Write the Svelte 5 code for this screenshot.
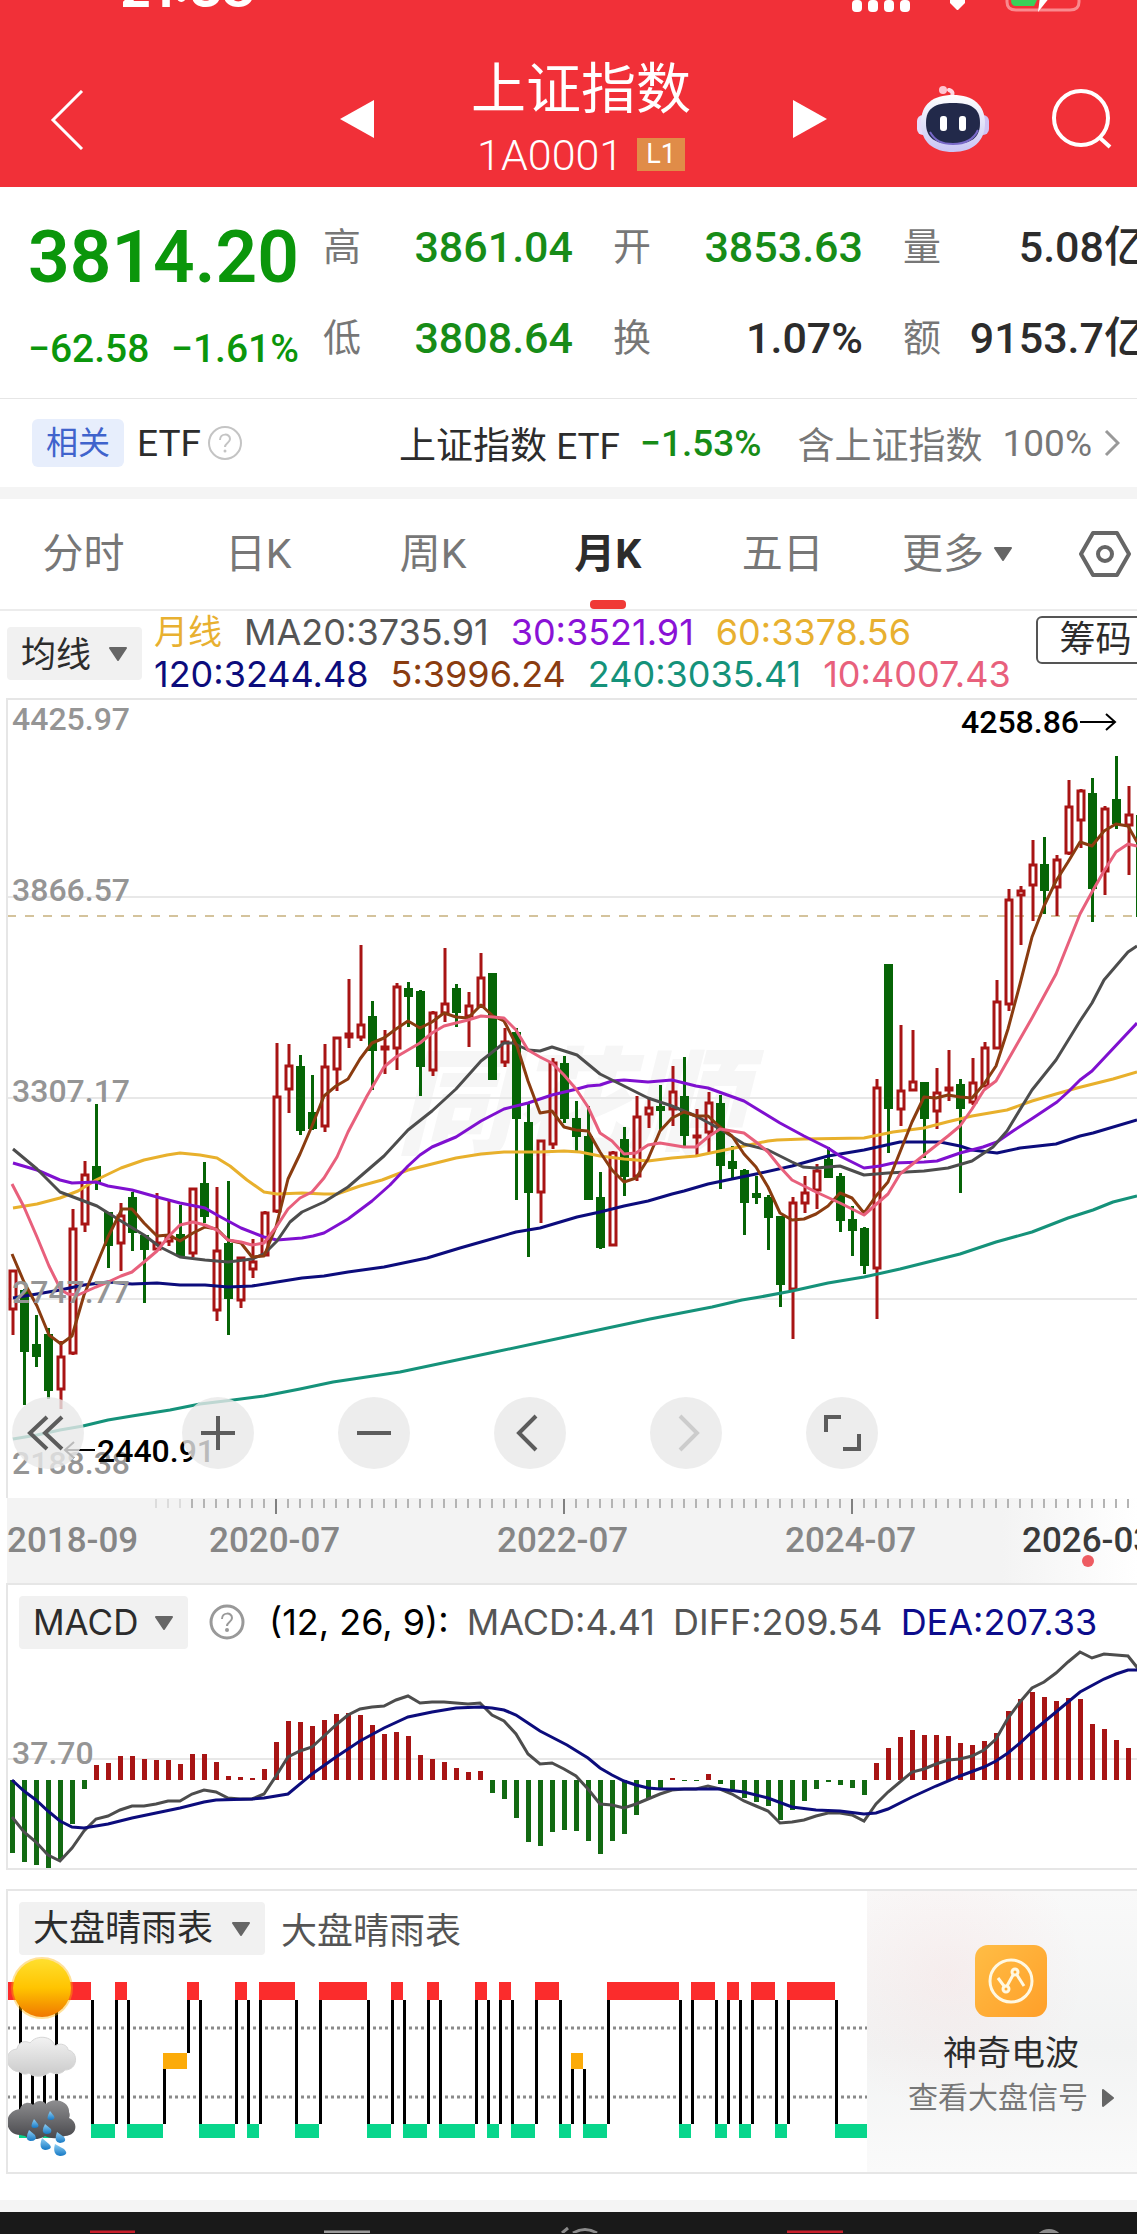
<script lang="ts">
	type Candle = [up: number, high: number, top: number, bottom: number, low: number];

	// one entry per month, oldest first
	const candles: Candle[] = [
		[1, 1271, 1271, 1311, 1336], [0, 1290, 1291, 1353, 1406], [0, 1316, 1345, 1358, 1368],
		[0, 1329, 1335, 1392, 1400], [1, 1342, 1357, 1391, 1410], [1, 1210, 1229, 1355, 1356],
		[1, 1162, 1175, 1226, 1233], [0, 1105, 1167, 1183, 1191], [0, 1213, 1213, 1247, 1269],
		[1, 1204, 1216, 1245, 1272], [0, 1193, 1198, 1234, 1252], [0, 1236, 1236, 1251, 1304],
		[1, 1194, 1243, 1251, 1251], [1, 1200, 1237, 1243, 1247], [0, 1206, 1235, 1257, 1258],
		[1, 1189, 1189, 1255, 1258], [0, 1163, 1184, 1218, 1224], [1, 1188, 1251, 1312, 1322],
		[0, 1182, 1244, 1300, 1336], [1, 1258, 1258, 1302, 1309], [1, 1240, 1262, 1271, 1279],
		[1, 1212, 1213, 1257, 1257], [1, 1044, 1097, 1213, 1214], [1, 1045, 1066, 1091, 1114],
		[0, 1056, 1067, 1132, 1136], [0, 1076, 1113, 1130, 1131], [1, 1045, 1067, 1128, 1133],
		[1, 1038, 1038, 1071, 1092], [1, 980, 1034, 1039, 1049], [1, 946, 1025, 1039, 1042],
		[0, 1002, 1017, 1052, 1091], [1, 1031, 1047, 1051, 1075], [1, 984, 987, 1050, 1071],
		[0, 983, 989, 998, 1028], [0, 991, 992, 1068, 1097], [1, 1012, 1013, 1072, 1077],
		[1, 949, 1004, 1015, 1023], [0, 985, 989, 1014, 1028], [1, 993, 1006, 1018, 1048],
		[1, 954, 978, 1008, 1009], [0, 974, 974, 1081, 1081], [1, 1029, 1042, 1064, 1068],
		[0, 1029, 1033, 1120, 1201], [0, 1105, 1123, 1194, 1258], [1, 1141, 1141, 1194, 1224],
		[1, 1059, 1063, 1146, 1150], [0, 1057, 1064, 1120, 1124], [0, 1102, 1119, 1138, 1152],
		[0, 1107, 1137, 1201, 1201], [0, 1173, 1198, 1249, 1250], [1, 1152, 1153, 1247, 1247],
		[0, 1128, 1140, 1178, 1197], [1, 1097, 1117, 1178, 1182], [1, 1098, 1108, 1116, 1129],
		[0, 1086, 1107, 1112, 1131], [1, 1067, 1092, 1111, 1127], [0, 1058, 1097, 1137, 1148],
		[1, 1110, 1136, 1139, 1156], [1, 1093, 1103, 1134, 1153], [0, 1096, 1104, 1167, 1190],
		[0, 1147, 1162, 1170, 1179], [0, 1170, 1171, 1204, 1236], [0, 1177, 1194, 1199, 1205],
		[0, 1196, 1198, 1219, 1251], [0, 1217, 1217, 1286, 1308], [1, 1198, 1203, 1291, 1340],
		[1, 1177, 1193, 1205, 1214], [1, 1165, 1171, 1192, 1210], [0, 1148, 1160, 1179, 1179],
		[0, 1174, 1177, 1222, 1233], [0, 1207, 1220, 1232, 1257], [0, 1228, 1229, 1267, 1275],
		[1, 1080, 1088, 1270, 1320], [0, 965, 965, 1110, 1154], [1, 1026, 1091, 1111, 1127],
		[1, 1031, 1082, 1092, 1092], [0, 1083, 1083, 1120, 1159], [1, 1069, 1093, 1113, 1130],
		[1, 1051, 1088, 1092, 1102], [0, 1080, 1085, 1110, 1194], [1, 1059, 1083, 1104, 1106],
		[1, 1043, 1048, 1088, 1088], [1, 981, 1002, 1050, 1050], [1, 890, 900, 1006, 1012],
		[1, 887, 891, 897, 946], [1, 841, 865, 887, 922], [0, 838, 865, 892, 915],
		[1, 856, 860, 889, 917], [1, 781, 807, 855, 856], [1, 790, 791, 822, 849],
		[0, 779, 794, 890, 923], [1, 807, 809, 873, 896], [0, 757, 800, 825, 830],
		[1, 787, 815, 827, 876], [0, 816, 816, 918, 918]
	];

	const averages = [
		{
			color: '#15927a',
			points:
				'13,1440 37,1436 60,1431 83,1427 108,1421 132,1417 170,1411 200,1405 233,1401 264,1397 300,1390 333,1383 400,1373 490,1354 570,1337 650,1320 712,1308 742,1301 760,1298 792,1292 828,1284 864,1278 900,1270 936,1261 960,1255 996,1243 1032,1233 1068,1219 1093,1211 1113,1203 1137,1197'
		},
		{
			color: '#0c0c7c',
			points:
				'13,1299 37,1295 60,1291 84,1286 108,1283 132,1285 157,1284 180,1286 205,1286 228,1288 252,1287 277,1283 302,1279 324,1277 348,1273 384,1268 427,1259 460,1249 481,1243 516,1233 540,1229 577,1218 600,1213 624,1207 648,1202 672,1195 684,1192 708,1185 732,1180 756,1175 792,1167 828,1157 864,1151 900,1143 940,1143 960,1147 972,1151 997,1154 1020,1149 1056,1145 1080,1137 1093,1134 1137,1121'
		},
		{
			color: '#e8b02c',
			points:
				'13,1209 37,1205 60,1199 78,1192 96,1181 121,1169 144,1161 167,1156 180,1154 200,1156 217,1159 230,1167 247,1181 264,1193 277,1195 302,1194 324,1195 337,1195 360,1187 382,1181 408,1171 432,1165 456,1159 481,1155 504,1153 540,1153 564,1152 580,1153 600,1157 624,1160 648,1162 672,1159 696,1157 720,1152 744,1147 768,1142 777,1141 804,1140 864,1139 893,1133 924,1129 947,1123 972,1117 1007,1111 1032,1102 1056,1095 1077,1089 1113,1080 1137,1073'
		},
		{
			color: '#7f10d0',
			points:
				'13,1164 37,1171 60,1181 72,1184 96,1183 108,1187 132,1191 157,1198 180,1204 205,1209 217,1216 241,1229 264,1238 277,1241 302,1239 313,1237 324,1234 348,1220 372,1202 390,1186 408,1167 420,1156 432,1148 456,1138 481,1122 504,1110 528,1104 552,1096 577,1090 588,1087 600,1086 612,1082 624,1081 648,1083 672,1081 696,1087 708,1089 744,1102 780,1124 804,1137 828,1149 840,1157 864,1169 880,1167 893,1164 924,1163 937,1162 960,1154 983,1148 997,1143 1013,1132 1033,1119 1057,1103 1068,1093 1080,1081 1092,1072 1137,1024'
		},
		{
			color: '#4d4d4d',
			points:
				'13,1150 37,1170 60,1193 97,1207 121,1222 144,1236 160,1248 180,1258 205,1261 228,1263 252,1260 264,1255 277,1242 290,1223 302,1213 324,1203 348,1188 384,1157 408,1131 432,1112 456,1090 481,1062 504,1044 513,1044 528,1051 540,1052 552,1048 577,1056 600,1075 624,1087 648,1099 672,1107 696,1117 720,1130 744,1145 768,1151 792,1163 803,1168 816,1169 840,1167 864,1176 888,1174 924,1172 948,1169 972,1162 993,1148 1007,1132 1032,1091 1056,1061 1080,1022 1092,1004 1104,981 1128,953 1137,947'
		},
		{
			color: '#8a3c10',
			points:
				'12,1255 24,1283 37,1307 49,1336 61,1345 72,1337 84,1296 96,1267 108,1238 117,1220 122,1210 132,1210 144,1224 157,1237 169,1236 180,1242 193,1234 205,1228 217,1230 228,1241 241,1244 252,1258 264,1257 276,1228 288,1180 300,1155 312,1127 324,1097 336,1087 348,1080 360,1060 372,1044 384,1039 396,1030 408,1022 420,1029 432,1023 444,1014 456,1018 468,1019 481,1006 493,1017 504,1022 517,1047 528,1082 540,1114 552,1112 564,1128 576,1131 588,1132 600,1153 612,1171 624,1183 636,1179 648,1160 660,1132 672,1119 684,1113 696,1117 708,1117 720,1128 732,1137 744,1155 756,1168 768,1188 780,1214 792,1221 804,1220 816,1215 828,1207 840,1194 852,1199 864,1214 876,1197 888,1183 900,1153 912,1123 924,1098 936,1099 948,1096 960,1098 972,1099 984,1085 996,1067 1008,1030 1020,985 1032,938 1044,907 1056,882 1068,863 1080,843 1092,847 1104,832 1116,825 1128,827 1137,843'
		},
		{
			color: '#e8607c',
			points:
				'12,1185 24,1208 37,1238 49,1267 61,1291 68,1295 78,1296 96,1288 108,1283 121,1277 132,1273 144,1263 157,1252 169,1237 180,1226 193,1223 205,1226 217,1231 228,1241 241,1243 252,1246 264,1244 277,1227 288,1210 300,1199 312,1193 324,1179 337,1158 348,1133 367,1097 384,1068 396,1058 420,1044 432,1034 444,1027 468,1021 481,1017 504,1019 516,1031 528,1051 540,1058 552,1064 564,1076 576,1090 588,1108 600,1134 612,1142 624,1155 636,1154 648,1146 660,1144 672,1146 684,1148 696,1148 708,1138 720,1130 744,1134 756,1143 768,1153 780,1168 792,1181 816,1193 840,1204 864,1216 888,1195 900,1175 924,1156 948,1137 960,1127 972,1110 984,1091 996,1082 1020,1040 1032,1019 1056,975 1080,915 1092,893 1104,872 1116,853 1128,845 1137,847'
		}
	];

	const zero = 1781;
	const histogram = [
		1854, 1863, 1866, 1869, 1860, 1825, 1790, 1766, 1764, 1757, 1757, 1760, 1761, 1761, 1765, 1755,
		1755, 1763, 1777, 1778, 1779, 1770, 1743, 1722, 1723, 1727, 1721, 1715, 1714, 1716, 1726, 1735,
		1733, 1737, 1756, 1760, 1763, 1769, 1773, 1772, 1794, 1800, 1819, 1843, 1847, 1833, 1831, 1832,
		1842, 1855, 1842, 1835, 1816, 1800, 1789, 1779, 1782, 1782, 1775, 1785, 1791, 1799, 1803, 1807,
		1821, 1811, 1802, 1790, 1783, 1786, 1789, 1796, 1764, 1749, 1738, 1731, 1736, 1736, 1737, 1744,
		1746, 1742, 1734, 1712, 1700, 1693, 1698, 1702, 1699, 1700, 1725, 1730, 1741, 1749
	];
	const diff = [
		1818, 1833, 1843, 1856, 1862, 1849, 1832, 1820, 1817, 1811, 1807, 1807, 1805, 1802, 1802, 1795,
		1791, 1793, 1799, 1800, 1800, 1795, 1777, 1758, 1752, 1748, 1737, 1726, 1716, 1710, 1708, 1707,
		1701, 1697, 1704, 1703, 1703, 1704, 1705, 1704, 1716, 1722, 1735, 1755, 1765, 1764, 1770, 1777,
		1790, 1805, 1806, 1809, 1805, 1800, 1795, 1791, 1790, 1790, 1787, 1790, 1795, 1802, 1807, 1812,
		1824, 1823, 1821, 1817, 1814, 1814, 1816, 1822, 1805, 1793, 1783, 1773, 1770, 1765, 1761, 1760,
		1757, 1751, 1740, 1719, 1703, 1689, 1683, 1674, 1663, 1653, 1659, 1655, 1656, 1657, 1672
	];
	const dea =
		'12,1781 24,1792 36,1801 48,1812 60,1822 72,1828 84,1829 96,1827 108,1825 132,1819 156,1814 180,1809 204,1803 216,1801 252,1800 264,1799 288,1795 312,1775 336,1758 360,1742 384,1729 408,1718 432,1713 456,1709 480,1708 492,1709 504,1711 516,1716 528,1724 540,1732 567,1746 588,1759 600,1769 612,1776 624,1782 636,1786 648,1789 660,1790 720,1790 744,1793 768,1799 792,1808 816,1811 840,1812 864,1815 876,1814 888,1810 912,1798 936,1787 960,1777 984,1768 996,1762 1008,1754 1020,1744 1032,1733 1056,1713 1080,1693 1104,1680 1116,1675 1128,1671 1140,1671';

	const xAt = (i: number) => 12 + i * 12;
	const diffPoints = diff.map((y, i) => `${xAt(i)},${y}`).join(' ');

	// runs of sunny (R), cloudy (Y) and rainy (G) months
	const weather =
		'R1 G1 Y1 G1 R3 G2 R1 G3 Y2 R1 G3 R1 G1 R3 G2 R4 G2 R1 G2 R1 G3 R1 G1 R1 G2 R2 G1 Y1 G2 R6 G1 R2 G1 R1 G1 R2 G1 R4 G7';
	const bands = {
		R: { top: 1983, bottom: 2001, color: '#fb2c2c' },
		Y: { top: 2054, bottom: 2070, color: '#fcab09' },
		G: { top: 2125, bottom: 2139, color: '#08d68c' }
	};

	let edge = 7;
	const runs = weather.split(' ').map((run) => {
		const band = bands[run[0] as keyof typeof bands];
		const x = edge;
		const width = Number(run.slice(1)) * 12;
		edge += width;
		return { ...band, x, width };
	});

	const axisTicks = Array.from({ length: 83 }, (_, i) => 156 + i * 12);
	const axisYears = [
		{ x: 209, text: '2020-07' },
		{ x: 497, text: '2022-07' },
		{ x: 785, text: '2024-07' }
	];

	const tabs = ['分时', '日K', '周K', '月K', '五日'];
	let active = $state('月K');
</script>

{#snippet caret()}
	<svg class="caret" viewBox="0 0 20 14" aria-hidden="true">
		<path d="M2 1h16L10 13z" fill="#666" stroke="#666" stroke-width="2" stroke-linejoin="round" />
	</svg>
{/snippet}

<main class="page">
	<header class="top">
		<div class="status">
			<span class="clock">21:38</span>
			<svg class="status-icons" viewBox="0 0 230 16" aria-hidden="true">
				<g fill="#fff">
					<rect x="0" y="0" width="10" height="12" rx="4" />
					<rect x="16" y="0" width="10" height="12" rx="4" />
					<rect x="32" y="0" width="10" height="12" rx="4" />
					<rect x="48" y="0" width="10" height="12" rx="4" />
					<path d="M98 0h15v3l-7 7h-1l-7-7z" />
				</g>
				<path d="M155 -4v6q0 8 9 8h54q9 0 9 -8v-6" fill="none" stroke="#f98a8e" stroke-width="3" />
				<path d="M159 0h26l-3 6h-18q-5 0 -5 -6z" fill="#38d158" />
				<path d="M188 -3h10l-12 15z" fill="#fff" />
			</svg>
		</div>
		<nav class="bar">
			<button class="back" type="button" aria-label="返回">
				<svg width="34" height="60" viewBox="0 0 34 60"><path d="M32 1L3 30l29 29" fill="none" stroke="#fff" stroke-width="3" /></svg>
			</button>
			<button type="button" aria-label="上一个">
				<svg width="34" height="38" viewBox="0 0 34 38"><path d="M34 0v38L0 19z" fill="#fff" /></svg>
			</button>
			<div class="heading">
				<h1>上证指数</h1>
				<p>1A0001 <span class="level">L1</span></p>
			</div>
			<button type="button" aria-label="下一个">
				<svg width="34" height="38" viewBox="0 0 34 38"><path d="M0 0v38l34-19z" fill="#fff" /></svg>
			</button>
			<button class="robot" type="button" aria-label="智能助手">
				<svg width="72" height="68" viewBox="0 0 72 68">
					<defs>
						<linearGradient id="shell" x1="0" y1="0" x2="0" y2="1">
							<stop offset="0" stop-color="#fff" />
							<stop offset=".6" stop-color="#dcdcf8" />
							<stop offset="1" stop-color="#c9c4f5" />
						</linearGradient>
					</defs>
					<path d="M34 13q4-6-2-8" fill="none" stroke="#ffd9e4" stroke-width="4" stroke-linecap="round" />
					<circle cx="26" cy="5" r="4" fill="#ffc5d2" />
					<rect x="0" y="30" width="12" height="20" rx="6" fill="#e6dcfa" />
					<rect x="60" y="30" width="12" height="20" rx="6" fill="#cfc3f4" />
					<path d="M36 10c20 0 32 10 32 28S56 67 36 67 4 57 4 38 16 10 36 10z" fill="url(#shell)" />
					<path d="M36 18c18 0 27 5 27 20S54 59 36 59 9 53 9 38s9-20 27-20z" fill="#22294a" />
					<path d="M13 47c5 9 12 12 23 12s20-3 25-14" fill="none" stroke="#7868c8" stroke-width="2" />
					<rect x="23" y="31" width="7" height="15" rx="3" fill="#fff" />
					<rect x="42" y="31" width="7" height="15" rx="3" fill="#fff" />
				</svg>
			</button>
			<button class="search" type="button" aria-label="搜索">
				<svg width="62" height="62" viewBox="0 0 62 62"><circle cx="30" cy="30" r="27" fill="none" stroke="#fff" stroke-width="4" /><path d="M48 49l11 10" stroke="#fff" stroke-width="4" /></svg>
			</button>
		</nav>
	</header>

	<section class="quote">
		<div class="last">
			<strong>3814.20</strong>
			<p><span>−62.58</span><span>−1.61%</span></p>
		</div>
		<dl>
			<div><dt>高</dt><dd class="down">3861.04</dd></div>
			<div><dt>开</dt><dd class="down">3853.63</dd></div>
			<div class="amount"><dt>量</dt><dd>5.08亿</dd></div>
			<div><dt>低</dt><dd class="down">3808.64</dd></div>
			<div><dt>换</dt><dd>1.07%</dd></div>
			<div class="amount"><dt>额</dt><dd>9153.7亿</dd></div>
		</dl>
	</section>

	<section class="related">
		<span class="tag">相关</span>
		<span class="etf">ETF</span>
		<button type="button" class="help" aria-label="ETF说明">
			<svg width="36" height="36" viewBox="0 0 36 36"><circle cx="18" cy="18" r="16" fill="none" stroke="#c4c4c4" stroke-width="2" /><path d="M13 15c0-7 10-7 10-1 0 4-5 4-5 8" fill="none" stroke="#c4c4c4" stroke-width="2" /><circle cx="18" cy="26" r="1.5" fill="#c4c4c4" /></svg>
		</button>
		<a class="fund" href="#etf">
			<span>上证指数 ETF</span>
			<b>−1.53%</b>
			<span class="share">含上证指数</span>
			<span class="share">100%</span>
			<svg width="16" height="28" viewBox="0 0 16 28" aria-hidden="true"><path d="M2 2l12 12L2 26" fill="none" stroke="#999" stroke-width="3" /></svg>
		</a>
	</section>

	<div class="band"></div>

	<nav class="tabs">
		{#each tabs as tab}
			<button type="button" class:active={active === tab} onclick={() => (active = tab)}>{tab}</button>
		{/each}
		<button type="button" class="more">更多{@render caret()}</button>
		<button type="button" class="settings" aria-label="设置">
			<svg width="52" height="46" viewBox="0 0 52 46"><path d="M14 2h24l12 21-12 21H14L2 23z" fill="none" stroke="#666" stroke-width="4" stroke-linejoin="round" /><circle cx="26" cy="23" r="7" fill="none" stroke="#666" stroke-width="4" /></svg>
		</button>
	</nav>

	<section class="legend">
		<div class="picker">
			<select aria-label="主图指标"><option>均线</option></select>
			{@render caret()}
		</div>
		<div class="values">
			<p>
				<span class="period">月线</span>
				<span class="ma20">MA20:3735.91</span>
				<span class="ma30">30:3521.91</span>
				<span class="ma60">60:3378.56</span>
			</p>
			<p>
				<span class="ma120">120:3244.48</span>
				<span class="ma5">5:3996.24</span>
				<span class="ma240">240:3035.41</span>
				<span class="ma10">10:4007.43</span>
			</p>
		</div>
		<button type="button" class="chips">筹码</button>
	</section>

	<section class="panel kline">
		<svg class="plot" viewBox="8 701 1129 798" role="img" aria-label="上证指数月K线">
			<text class="watermark" x="396" y="1146">同花顺</text>
			<g stroke="#e8e8e8" stroke-width="2">
				<path d="M7 898H1137M7 1099H1137M7 1300H1137" />
			</g>
			<path d="M7 917H1137" stroke="#d4c39c" stroke-width="2" stroke-dasharray="9 9" />
			{#each candles as [up, high, top, bottom, low], i}
				{@const x = xAt(i)}
				{#if up}
					<g fill="none" stroke="#a81414" stroke-width="3">
						<path d="M{x + 1} {high}V{top}M{x + 1} {bottom}V{low}" />
						<rect x={x - 2} y={top + 1} width="6" height={Math.max(bottom - top - 2, 1)} />
					</g>
				{:else}
					<g fill="#066406">
						<rect x={x - 1} y={high} width="3" height={low - high} />
						<rect x={x - 4} y={top} width="9" height={bottom - top} />
					</g>
				{/if}
			{/each}
			{#each averages as line}
				<polyline points={line.points} fill="none" stroke={line.color} stroke-width="3" stroke-linejoin="round" />
			{/each}
			<g class="scale">
				<text x="12" y="731">4425.97</text>
				<text x="12" y="902">3866.57</text>
				<text x="12" y="1103">3307.17</text>
				<text x="12" y="1304">2747.77</text>
				<text x="12" y="1475">2188.38</text>
			</g>
			<text class="extreme" x="961" y="734">4258.86</text>
			<text class="extreme" x="97" y="1463">2440.91</text>
			<path d="M1080 723h34M1106 715l9 8-9 8M95 1451H66M74 1443l-9 8 9 8" fill="none" stroke="#000" stroke-width="2" />
		</svg>
		<div class="controls">
			<button type="button" class="first" aria-label="移到最左">
				<svg viewBox="0 0 72 72"><path d="M35 20L18 36l17 16M50 20L33 36l17 16" /></svg>
			</button>
			<button type="button" aria-label="放大">
				<svg viewBox="0 0 72 72"><path d="M19 36h34M36 19v34" /></svg>
			</button>
			<button type="button" aria-label="缩小">
				<svg viewBox="0 0 72 72"><path d="M19 36h34" /></svg>
			</button>
			<button type="button" aria-label="左移">
				<svg viewBox="0 0 72 72"><path d="M42 19L25 36l17 17" /></svg>
			</button>
			<button type="button" aria-label="右移" disabled>
				<svg viewBox="0 0 72 72"><path d="M30 19l17 17-17 17" /></svg>
			</button>
			<button type="button" aria-label="全屏">
				<svg viewBox="0 0 72 72"><path d="M20 35V20h15M37 52h16V37" /></svg>
			</button>
		</div>
	</section>

	<svg class="axis" viewBox="7 1499 1130 85" role="img" aria-label="时间轴">
		<defs>
			<linearGradient id="fade"><stop offset="0" stop-color="#f3f3f3" /><stop offset=".88" stop-color="#f3f3f3" /><stop offset="1" stop-color="#fff" /></linearGradient>
		</defs>
		<rect x="7" y="1499" width="1130" height="85" fill="url(#fade)" />
		{#each axisTicks as x}
			{@const major = (x - 276) % 288 === 0}
			<rect x={x - 1} y="1500" width="2" height={major ? 15 : 9} fill={major ? '#808080' : x < 190 ? '#dcdcdc' : '#b4b4b4'} />
		{/each}
		<text x="7" y="1553">2018-09</text>
		{#each axisYears as year}
			<text x={year.x} y="1553">{year.text}</text>
		{/each}
		<text class="now" x="1022" y="1553">2026-03</text>
		<circle cx="1088" cy="1562" r="6" fill="#ee5c62" />
	</svg>

	<section class="panel macd">
		<div class="panel-head">
			<div class="picker">
				<select aria-label="副图指标"><option>MACD</option></select>
				{@render caret()}
			</div>
			<button type="button" class="help" aria-label="MACD说明">
				<svg width="36" height="36" viewBox="0 0 36 36"><circle cx="18" cy="18" r="16" fill="none" stroke="#999" stroke-width="3" /><path d="M13 15c0-7 10-7 10-1 0 4-5 4-5 8" fill="none" stroke="#999" stroke-width="2" /><circle cx="18" cy="26" r="2" fill="#999" /></svg>
			</button>
			<span class="params">(12, 26, 9):</span>
			<span class="macd-value">MACD:4.41</span>
			<span class="diff">DIFF:209.54</span>
			<span class="dea">DEA:207.33</span>
		</div>
		<svg class="plot" viewBox="8 1650 1129 219" role="img" aria-label="MACD">
			<path d="M7 1760H1137" stroke="#e8e8e8" stroke-width="2" />
			<text class="scale" x="12" y="1765">37.70</text>
			{#each histogram as y, i}
				<rect x={xAt(i) - 2} y={Math.min(y, zero)} width="5" height={Math.abs(y - zero)} fill={y < zero ? '#a81414' : '#126a12'} />
			{/each}
			<polyline points={diffPoints} fill="none" stroke="#4d4d4d" stroke-width="3" />
			<polyline points={dea} fill="none" stroke="#0c0c7c" stroke-width="3" />
		</svg>
	</section>

	<section class="panel barometer">
		<div class="barometer-main">
			<div class="panel-head">
				<div class="picker">
					<select aria-label="副图指标二"><option>大盘晴雨表</option></select>
					{@render caret()}
				</div>
				<span class="name">大盘晴雨表</span>
			</div>
			<svg class="plot" viewBox="8 1956 859 217" role="img" aria-label="大盘晴雨表">
				<defs>
					<linearGradient id="sun" x1="0" y1="0" x2="0" y2="1">
						<stop offset="0" stop-color="#ffdf2e" />
						<stop offset=".5" stop-color="#ffc400" />
						<stop offset="1" stop-color="#f07800" />
					</linearGradient>
					<linearGradient id="cloud" x1="0" y1="0" x2="0" y2="1">
						<stop offset="0" stop-color="#f2f2f2" />
						<stop offset="1" stop-color="#cacaca" />
					</linearGradient>
					<linearGradient id="storm" x1="0" y1="0" x2="0" y2="1">
						<stop offset="0" stop-color="#8e8e90" />
						<stop offset="1" stop-color="#48484c" />
					</linearGradient>
					<linearGradient id="drop" x1="0" y1="0" x2="0" y2="1">
						<stop offset="0" stop-color="#8fd0f5" />
						<stop offset="1" stop-color="#1578c4" />
					</linearGradient>
				</defs>
				<path d="M7 2029H867M7 2098H867" stroke="#8a8a8a" stroke-width="3" stroke-dasharray="3 3" />
				{#each runs as run, i}
					{#if i > 0}
						{@const prev = runs[i - 1]}
						{@const from = Math.min(prev.bottom, run.bottom)}
						{@const to = Math.max(prev.top, run.top)}
						<rect x={run.x - 1} y={from} width="6" height={to - from} fill="#fff" />
						<rect x={run.x} y={from} width="3" height={to - from} />
					{/if}
					<rect x={run.x} y={run.top} width={run.width} height={run.bottom - run.top} fill={run.color} />
				{/each}
				<circle cx="42" cy="1989" r="31" fill="#ffb300" opacity=".4" />
				<circle cx="42" cy="1989" r="29" fill="url(#sun)" />
				<path d="M20 2073C4 2072 3 2051 17 2050c1-7 8-9 13-6 7-9 22-7 25 3 5-4 13-1 13 4 11 2 10 20-3 20-5 6-13 3-15 2-7 6-18 5-21 1-3 2-7 1-9-1z" fill="url(#cloud)" stroke="#d6d6d6" />
				<path d="M20 2136C3 2135 3 2112 20 2110c2-7 10-8 13-4 3-5 10-5 13-1 8-8 24-2 23 8 1 2 1 4 0 6 10 4 8 18-4 18-9 4-17 2-20 0-7 5-17 3-20 0z" fill="url(#storm)" />
				<g fill="url(#drop)">
					<path d="M50 2112q-5 9 0 9 6 0 4-4z" />
					<path d="M34 2120q-5 9 0 9 6 0 4-4z" />
					<path d="M45 2125q-5 9 1 10 7 0 5-5z" />
					<path d="M29 2131q-5 10 1 11 8 0 5-6z" />
					<path d="M57 2133q-4 10 3 11 8-1 4-6z" />
					<path d="M42 2139q-4 11 3 12 9-1 4-6z" />
					<path d="M55 2145q-3 11 5 12 10-1 4-7z" />
				</g>
			</svg>
		</div>
		<a class="promo" href="#wave">
			<svg width="72" height="72" viewBox="0 0 72 72" aria-hidden="true">
				<defs><linearGradient id="wave" x1="0" y1="0" x2="1" y2="1"><stop offset="0" stop-color="#ffbd45" /><stop offset="1" stop-color="#ff9f29" /></linearGradient></defs>
				<rect width="72" height="72" rx="13" fill="url(#wave)" />
				<g fill="none" stroke="#fff8e2" stroke-width="3">
					<circle cx="36" cy="36" r="21" />
					<circle cx="31" cy="44" r="3" />
					<circle cx="40" cy="27" r="3" />
					<path d="M23 33l6 8M32 41l6-11M42 30l7 11" />
				</g>
			</svg>
			<strong>神奇电波</strong>
			<span>查看大盘信号<svg width="12" height="20" viewBox="0 0 12 20" aria-hidden="true"><path d="M1 2l10 8-10 8z" fill="#666" stroke="#666" stroke-width="2" stroke-linejoin="round" /></svg></span>
		</a>
	</section>

	<div class="band"></div>
	<footer>
		<svg viewBox="0 0 1137 21" aria-hidden="true">
			<path d="M90 20h45M787 20h56" stroke="#c8202c" stroke-width="3" />
			<path d="M324 20h46" stroke="#9a9a9a" stroke-width="3" />
			<path d="M562 21l6-5M573 21q12-7 24 0" fill="none" stroke="#8c8c8c" stroke-width="3" />
			<circle cx="1049" cy="32" r="15" fill="#8c8c8c" />
		</svg>
	</footer>
</main>

<style>
	:global(body) {
		margin: 0;
		background: #fff;
	}

	.page {
		overflow: hidden;
		color: #2c2c2c;
		font-family: Roboto, 'Noto Sans CJK SC', sans-serif;
	}

	button {
		padding: 0;
		border: none;
		background: none;
		color: inherit;
		font: inherit;
		cursor: pointer;
	}

	button svg {
		display: block;
	}

	h1,
	p,
	dl,
	dd {
		margin: 0;
	}

	.top {
		background: #f13038;
		color: #fff;
	}

	.status {
		display: flex;
		align-items: flex-end;
		justify-content: space-between;
		height: 16px;
		padding: 0 55px 0 120px;
		overflow: hidden;
	}

	.clock {
		font: 700 50px/50px Inter, sans-serif;
		height: 52px;
	}

	.status-icons {
		width: 230px;
		height: 16px;
	}

	.bar {
		display: flex;
		align-items: center;
		height: 171px;
		padding: 0 24px 0 50px;
	}

	.back {
		margin: 36px 256px 0 0;
	}

	.back ~ button {
		margin-top: 34px;
	}

	.heading {
		flex: 1;
		padding: 32px 5px 0 0;
		text-align: center;
	}

	.heading h1 {
		font-size: 55px;
		font-weight: 400;
		line-height: 74px;
	}

	.heading p {
		display: flex;
		align-items: center;
		justify-content: center;
		gap: 14px;
		font-size: 43px;
		font-weight: 300;
		line-height: 58px;
	}

	.level {
		padding: 0 9px;
		background: #e08c48;
		font-size: 27px;
		font-weight: 400;
		line-height: 33px;
	}

	.bar .robot {
		margin-left: 90px;
		margin-right: 62px;
	}

	.quote {
		display: flex;
		align-items: center;
		gap: 24px;
		height: 211px;
		padding-left: 28px;
		border-bottom: 1px solid #e6e6e6;
	}

	.last {
		padding-top: 16px;
		color: #0b960b;
		font-weight: 500;
	}

	.last strong {
		display: block;
		font-size: 73px;
		font-weight: 600;
		line-height: 96px;
	}

	.last p {
		display: flex;
		justify-content: space-between;
		font-size: 39px;
		line-height: 88px;
	}

	dl {
		display: grid;
		flex: 1;
		grid-template-columns: 250px 250px 1fr;
		column-gap: 40px;
	}

	dl div {
		display: flex;
		justify-content: space-between;
		line-height: 91px;
		white-space: nowrap;
	}

	dl .amount {
		width: 244px;
	}

	dt {
		color: #777;
		font-size: 38px;
	}

	dd {
		font-size: 43px;
		font-weight: 500;
	}

	.down {
		color: #178c17;
	}

	.related {
		display: flex;
		align-items: center;
		height: 88px;
		padding: 0 17px 0 32px;
		font-size: 37px;
	}

	.tag {
		padding: 0 14px;
		border-radius: 6px;
		background: #e7eefc;
		color: #3f63cc;
		font-size: 32px;
		line-height: 48px;
	}

	.etf {
		margin: 0 6px 0 13px;
	}

	.fund {
		display: flex;
		align-items: center;
		gap: 20px;
		margin-left: auto;
		color: inherit;
		text-decoration: none;
	}

	.fund b {
		margin-right: 16px;
		color: #178c17;
		font-weight: 500;
	}

	.fund svg {
		margin-left: -8px;
	}

	.share {
		color: #777;
	}

	.band {
		height: 12px;
		background: #f4f4f4;
	}

	.tabs {
		display: grid;
		grid-template-columns: repeat(6, 1fr) 86px;
		height: 110px;
		padding-right: 6px;
		margin-left: -4px;
		border-bottom: 2px solid #ececec;
		color: #777;
		font-size: 41px;
	}

	.tabs button {
		position: relative;
		line-height: 110px;
	}

	.tabs .active {
		color: #2c2c2c;
		font-weight: 700;
	}

	.active::after {
		position: absolute;
		bottom: 0;
		left: calc(50% - 18px);
		width: 36px;
		height: 9px;
		border-radius: 4px;
		background: #f03a36;
		content: '';
	}

	.more {
		display: flex;
		align-items: center;
		justify-content: center;
		gap: 9px;
	}

	.settings {
		justify-self: end;
	}

	.caret {
		width: 20px;
		height: 14px;
	}

	.legend {
		display: flex;
		height: 87px;
	}

	.picker {
		position: relative;
		margin: 16px 12px 0 7px;
	}

	.picker select {
		width: 135px;
		height: 53px;
		padding: 0 14px;
		border: none;
		border-radius: 4px;
		background: #f1f1f1;
		color: #2c2c2c;
		font: 35px Inter, 'Noto Sans CJK SC', sans-serif;
		appearance: none;
	}

	.picker .caret {
		position: absolute;
		top: 20px;
		right: 14px;
		pointer-events: none;
	}

	.values {
		flex: 1;
		font: 36px/42px Inter, 'Noto Sans CJK SC', sans-serif;
		white-space: nowrap;
	}

	.values p {
		display: flex;
		gap: 22px;
	}

	.period {
		font-size: 34px;
	}

	.ma20 {
		color: #555;
	}

	.ma30 {
		color: #8a12d6;
	}

	.period,
	.ma60 {
		color: #e8b030;
	}

	.ma120 {
		color: #0c0c7c;
	}

	.ma5 {
		color: #8a3c10;
	}

	.ma240 {
		color: #15927a;
	}

	.ma10 {
		color: #e8607c;
	}

	.chips {
		width: 119px;
		height: 48px;
		margin: 5px -18px 0 0;
		border: 2px solid #555;
		border-radius: 6px;
		font-size: 36px;
		line-height: 42px;
	}

	.panel {
		position: relative;
		margin-left: 6px;
		border-top: 2px solid #e6e6e6;
		border-left: 2px solid #e6e6e6;
	}

	.plot,
	.axis {
		display: block;
		width: 100%;
	}

	.scale {
		fill: #959595;
		font-size: 32px;
		font-weight: 500;
	}

	.extreme {
		font-size: 32px;
		font-weight: 500;
	}

	.watermark {
		fill: #f6f6f6;
		font: italic 900 116px 'Noto Sans CJK SC', sans-serif;
	}

	.controls {
		position: absolute;
		bottom: 29px;
		left: 4px;
		display: flex;
		gap: 84px;
	}

	.controls button {
		width: 72px;
		height: 72px;
		border-radius: 50%;
		background: rgb(233 233 233 / 80%);
	}

	.controls .first {
		margin-right: 14px;
	}

	.controls path {
		fill: none;
		stroke: #5c5c5c;
		stroke-width: 4;
	}

	.controls :disabled path {
		stroke: #ccc;
	}

	.axis {
		width: calc(100% - 7px);
		margin-left: 7px;
	}

	.axis text {
		fill: #868686;
		font-size: 35px;
		font-weight: 500;
	}

	.axis .now {
		fill: #3a3a3a;
	}

	.macd {
		border-bottom: 2px solid #e6e6e6;
	}

	.panel-head {
		display: flex;
		align-items: center;
		height: 64px;
		font: 36px Inter, 'Noto Sans CJK SC', sans-serif;
		white-space: nowrap;
	}

	.panel-head .picker {
		margin: 10px 21px 0 11px;
	}

	.panel-head .picker select {
		width: 100%;
		padding-right: 49px;
	}

	.panel-head .help,
	.panel-head > span {
		margin-top: 10px;
	}

	.params {
		margin-left: 24px;
		color: #000;
	}

	.macd-value,
	.diff,
	.dea {
		margin-left: 18px;
		color: #555;
	}

	.panel-head .dea {
		color: #0c0c8c;
	}

	.barometer {
		display: grid;
		grid-template-columns: 859fr 270fr;
		margin-top: 19px;
		margin-bottom: 26px;
		border-bottom: 2px solid #e6e6e6;
	}

	.barometer .picker {
		margin-right: 16px;
	}

	.barometer .picker select {
		padding-right: 51px;
		font-size: 36px;
	}

	.name {
		color: #555;
	}

	.promo {
		display: flex;
		flex-direction: column;
		align-items: center;
		padding: 54px 0 0 18px;
		background:
			radial-gradient(circle at 30% 30%, rgb(255 90 90 / 6%), transparent 50%),
			linear-gradient(#f9f9f9, #f2f3f3 55%, #fafafa);
		color: #2c2c2c;
		text-decoration: none;
	}

	.promo strong {
		margin-top: 12px;
		font-size: 34px;
		font-weight: 400;
		line-height: 48px;
	}

	.promo span {
		display: flex;
		align-items: center;
		gap: 14px;
		color: #777;
		font-size: 30px;
		line-height: 42px;
	}

	footer {
		height: 22px;
		overflow: hidden;
		background: #191919;
	}

	footer svg {
		display: block;
		width: 100%;
	}
</style>
